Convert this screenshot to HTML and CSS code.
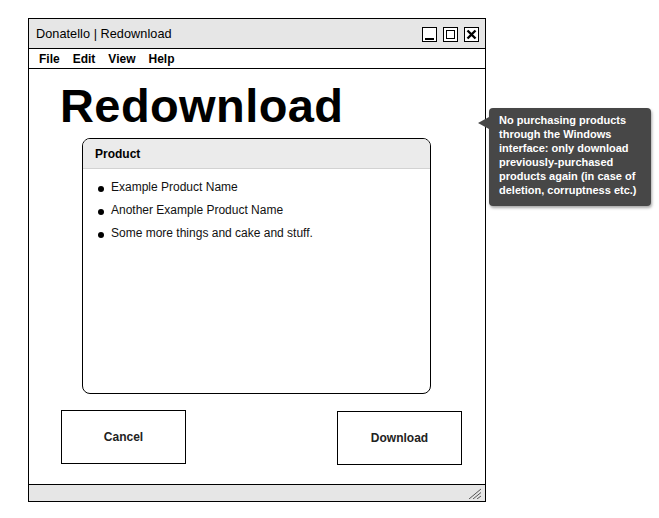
FILE: index.html
```html
<!DOCTYPE html>
<html>
<head>
<meta charset="utf-8">
<link rel="stylesheet" href="styles.css">
</head>
<body>
<div class="window">
  <div class="titlebar">
    <span class="title">Donatello | Redownload</span>
    <div class="controls">
      <span class="ctl"><svg width="13" height="13" viewBox="0 0 13 13"><rect x="2" y="10" width="9" height="2" fill="#000"/></svg></span>
      <span class="ctl"><svg width="13" height="13" viewBox="0 0 13 13"><rect x="2.5" y="2.5" width="8" height="8" fill="none" stroke="#000" stroke-width="1"/></svg></span>
      <span class="ctl"><svg width="13" height="13" viewBox="0 0 13 13"><path d="M2.5 2.5 L10.5 10.5 M10.5 2.5 L2.5 10.5" stroke="#000" stroke-width="2.4"/></svg></span>
    </div>
  </div>
  <div class="menubar">
    <span>File</span><span>Edit</span><span>View</span><span>Help</span>
  </div>
  <div class="content">
    <h1 class="heading">Redownload</h1>
    <div class="panel">
      <div class="panel-head">Product</div>
      <ul class="items">
        <li>Example Product Name</li>
        <li>Another Example Product Name</li>
        <li>Some more things and cake and stuff.</li>
      </ul>
    </div>
    <div class="actions">
      <div class="btn btn-cancel">Cancel</div>
      <div class="btn btn-download">Download</div>
    </div>
  </div>
  <div class="statusbar">
    <svg class="grip" width="16" height="12" viewBox="0 0 16 12"><path d="M3 12 L15 2 M7 12 L15 5.5 M11 12 L15 9" stroke="#555" stroke-width="1"/></svg>
  </div>
</div>
<div class="tooltip">No purchasing products through the Windows interface: only download previously-purchased products again (in case of deletion, corruptness etc.)</div>
</body>
</html>
```

FILE: styles.css
```css
html, body {
  margin: 0;
  padding: 0;
  background: #fff;
  font-family: "Liberation Sans", Arial, sans-serif;
  color: #000;
}

.window {
  position: relative;
  margin: 18px 0 0 28px;
  width: 456px;
  height: 482px;
  border: 1px solid #000;
  display: flex;
  flex-direction: column;
  box-sizing: content-box;
}

.titlebar {
  height: 29px;
  background: #e6e6e6;
  border-bottom: 1px solid #000;
  display: flex;
  align-items: center;
  justify-content: space-between;
  padding: 0 6px 0 7px;
  flex-shrink: 0;
}

.title {
  font-size: 12.7px;
  letter-spacing: 0.05px;
}

.controls {
  display: flex;
  gap: 6px;
  margin-top: 1px;
}

.ctl {
  width: 13px;
  height: 13px;
  border: 1px solid #000;
  background: #fff;
  display: block;
}

.ctl svg {
  display: block;
}

.menubar {
  height: 19px;
  border-bottom: 1px solid #000;
  display: flex;
  align-items: center;
  gap: 13px;
  padding-left: 10px;
  font-size: 12px;
  font-weight: bold;
  flex-shrink: 0;
}

.content {
  flex: 1;
  display: flex;
  flex-direction: column;
  position: relative;
}

.heading {
  margin: 13px 0 0 31px;
  font-size: 47px;
  line-height: 47px;
  font-weight: bold;
  letter-spacing: 0.4px;
}

.panel {
  margin: 9px 0 0 53px;
  width: 347px;
  height: 254px;
  border: 1px solid #000;
  border-radius: 8px;
  overflow: hidden;
}

.panel-head {
  height: 29px;
  background: #ebebeb;
  border-bottom: 1px solid #d2d2d2;
  font-size: 12px;
  font-weight: bold;
  line-height: 30px;
  padding-left: 12px;
}

.items {
  list-style: none;
  margin: 7px 0 0 0;
  padding: 0 0 0 14px;
}

.items li {
  position: relative;
  font-size: 12px;
  line-height: 23px;
  padding-left: 14px;
  color: #111;
}

.items li::before {
  content: "";
  position: absolute;
  left: 1px;
  top: 10px;
  width: 6px;
  height: 6px;
  border-radius: 50%;
  background: #000;
}

.actions {
  display: flex;
  justify-content: space-between;
  align-items: flex-start;
  margin: 16px 23px 0 32px;
}

.btn {
  width: 123px;
  height: 52px;
  border: 1px solid #000;
  display: flex;
  align-items: center;
  justify-content: center;
  font-size: 12px;
  font-weight: bold;
  color: #222;
}

.btn-download {
  margin-top: 1px;
}

.statusbar {
  height: 16px;
  border-top: 1px solid #000;
  background: #e6e6e6;
  flex-shrink: 0;
  position: relative;
}

.grip {
  position: absolute;
  right: 3px;
  bottom: 2px;
}

.tooltip {
  position: absolute;
  left: 489px;
  top: 108px;
  width: 152px;
  height: 90px;
  padding: 5px 0 3px 10px;
  background: #474747;
  color: #fff;
  font-size: 11px;
  font-weight: bold;
  line-height: 14px;
  border-radius: 4px;
  box-shadow: 1px 2px 3px rgba(0, 0, 0, 0.35);
}

.tooltip::before {
  content: "";
  position: absolute;
  left: -11px;
  top: 9px;
  border-style: solid;
  border-width: 6px 11px 6px 0;
  border-color: transparent #474747 transparent transparent;
}
```
